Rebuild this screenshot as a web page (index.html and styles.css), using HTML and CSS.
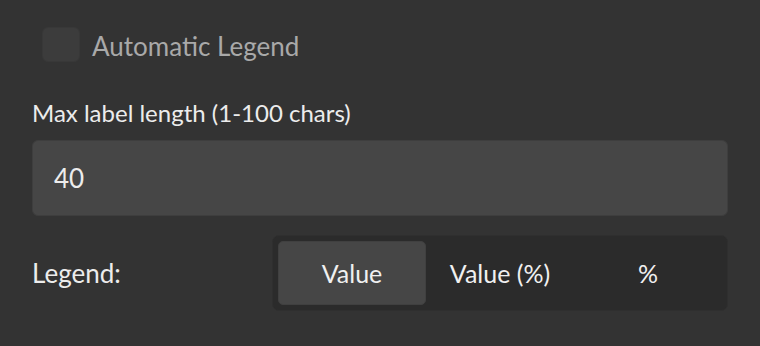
FILE: index.html
```html
<!DOCTYPE html>
<html>
<head>
<meta charset="utf-8">
<link rel="stylesheet" href="styles.css">
</head>
<body>
<div class="panel">
  <label class="check-row">
    <span class="checkbox"></span>
    <span class="check-label">Automatic Legend</span>
  </label>
  <div class="field">
    <div class="field-label">Max label length (1-100 chars)</div>
    <div class="input">40</div>
  </div>
  <div class="legend-row">
    <div class="legend-label">Legend:</div>
    <div class="segmented">
      <div class="seg active">Value</div>
      <div class="seg">Value (%)</div>
      <div class="seg">%</div>
    </div>
  </div>
</div>
</body>
</html>
```
FILE: styles.css
```css
html, body {
  margin: 0;
  padding: 0;
  background: #333333;
  width: 760px;
  height: 346px;
  overflow: hidden;
}
.panel {
  font-family: Lato, "Noto Sans", sans-serif;
  padding: 27px 32px 0 32px;
  width: 696px;
}
.check-row {
  display: flex;
  align-items: center;
  gap: 12px;
  padding-left: 10px;
  height: 35px;
}
.checkbox {
  width: 36px;
  height: 33px;
  border: 1px solid #383838;
  background: #3c3c3c;
  border-radius: 6px;
}
.check-label {
  font-size: 26px;
  color: #a9a9a9;
  line-height: 35px;
  position: relative;
  top: 2px;
}
.field {
  margin-top: 36px;
}
.field-label {
  font-size: 24px;
  color: #ececec;
  line-height: 29px;
  height: 29px;
}
.input {
  margin-top: 13px;
  height: 74px;
  border: 1px solid #3e3e3e;
  background: #464646;
  border-radius: 6px;
  box-sizing: content-box;
  padding-left: 21px;
  font-size: 26px;
  line-height: 74px;
  color: #ececec;
}
.legend-row {
  margin-top: 19px;
  display: flex;
  align-items: center;
}
.legend-label {
  width: 240px;
  font-size: 26px;
  color: #ececec;
}
.segmented {
  flex: 1;
  height: 64px;
  padding: 5px;
  border: 1px solid #2f2f2f;
  background: #2b2b2b;
  border-radius: 7px;
  display: grid;
  grid-template-columns: 1fr 1fr 1fr;
}
.seg {
  display: flex;
  align-items: center;
  justify-content: center;
  font-size: 25px;
  color: #f0f0f0;
  border-radius: 5px;
}
.seg.active {
  background: #464646;
  border: 1px solid #404040;
}
```
